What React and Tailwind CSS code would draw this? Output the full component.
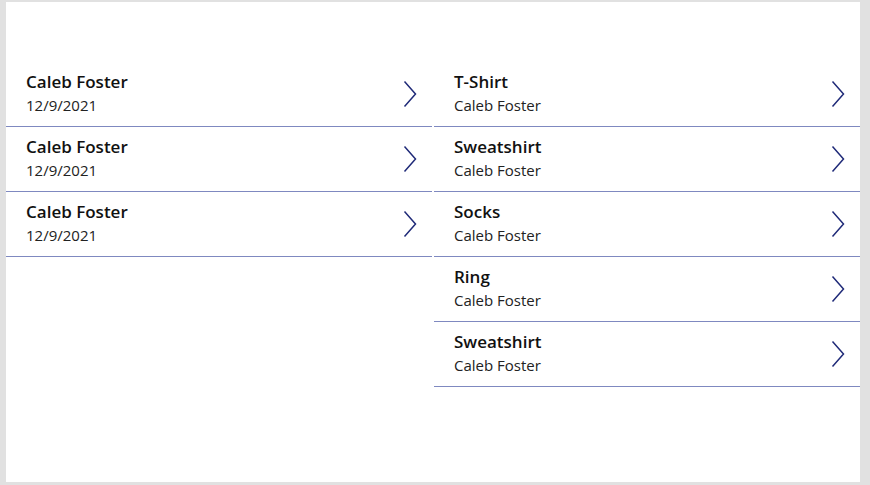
import React from 'react';

const orders = [
  { title: 'Caleb Foster', sub: '12/9/2021' },
  { title: 'Caleb Foster', sub: '12/9/2021' },
  { title: 'Caleb Foster', sub: '12/9/2021' },
];

const items = [
  { title: 'T-Shirt', sub: 'Caleb Foster' },
  { title: 'Sweatshirt', sub: 'Caleb Foster' },
  { title: 'Socks', sub: 'Caleb Foster' },
  { title: 'Ring', sub: 'Caleb Foster' },
  { title: 'Sweatshirt', sub: 'Caleb Foster' },
];

const Chevron = () => (
  <svg width="14" height="28" viewBox="0 0 14 28" fill="none" className="shrink-0">
    <path d="M1.5 1.5 L12.5 14 L1.5 26.5" stroke="#1f2a78" strokeWidth="1.5" />
  </svg>
);

const Row = ({ title, sub }) => (
  <div className="flex items-center h-[65px] border-b border-[#7f89c0] pl-5 pr-[15px]">
    <div className="flex-1 self-start pt-[9px]">
      <div className="text-[17px] leading-[22px] font-semibold text-[#111]">{title}</div>
      <div className="text-[15px] leading-[20px] mt-[2px] text-[#222]">{sub}</div>
    </div>
    <Chevron />
  </div>
);

const App = () => {
  return (
    <div
      className="w-[870px] h-[485px] bg-[#e1e1e1] pl-[6px] pr-[10px] pt-[2px] pb-[3px]"
      style={{ fontFamily: '"Open Sans", "Noto Sans", sans-serif' }}
    >
      <div className="h-full bg-white pt-[60px] flex gap-[2px]">
        <div className="w-[426px]">
          {orders.map((o, i) => (
            <Row key={i} {...o} />
          ))}
        </div>
        <div className="w-[426px]">
          {items.map((o, i) => (
            <Row key={i} {...o} />
          ))}
        </div>
      </div>
    </div>
  );
};

export default App;
